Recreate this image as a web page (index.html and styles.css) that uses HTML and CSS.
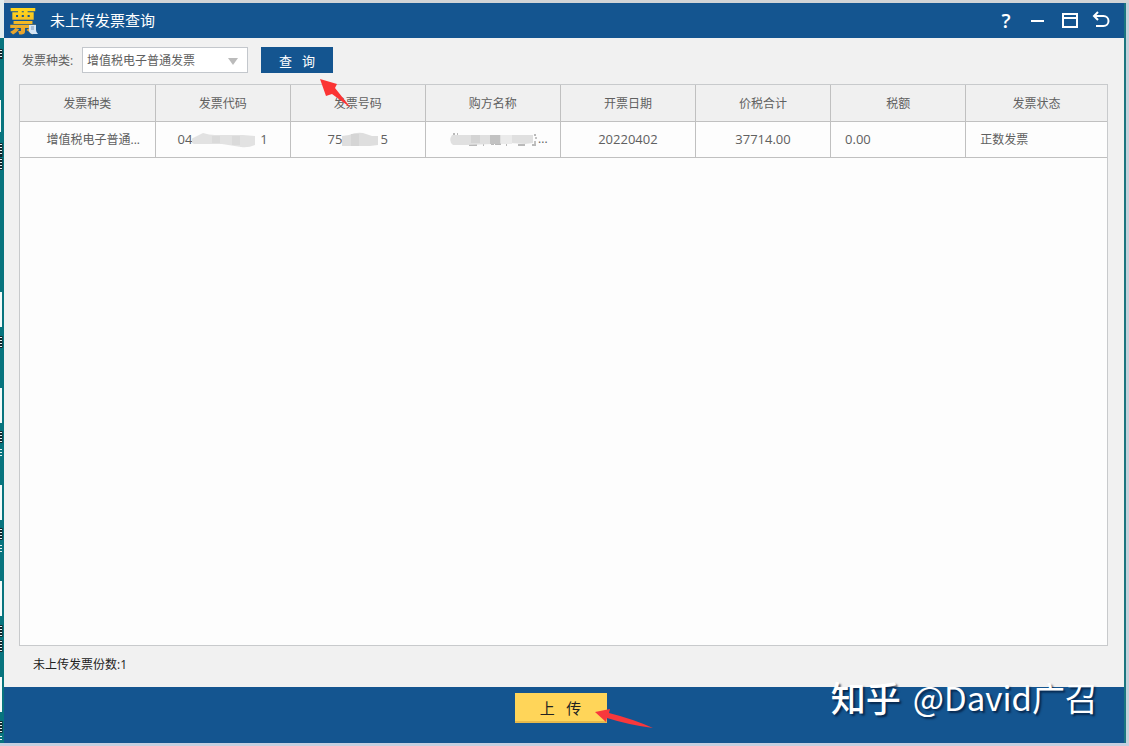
FILE: index.html
```html
<!DOCTYPE html>
<html lang="zh-CN">
<head>
    <meta charset="UTF-8">
    <meta name="viewport" content="width=device-width, initial-scale=1.0">
    <title>未上传发票查询</title>
    <link rel="stylesheet" href="styles.css">
</head>
<body>

    <!-- desktop showing behind the left edge of the window -->
    <svg class="desktop-edge" width="4" height="746" aria-hidden="true">
        <rect width="4" height="38" fill="#e4eeee"/>
        <g fill="#f4fafa">
            <rect y="100" width="1" height="32"/>
            <rect y="292" width="2" height="35"/>
            <rect y="388" width="2" height="35"/>
            <rect y="485" width="2" height="35"/>
            <rect y="581" width="2" height="35"/>
            <rect y="677" width="2" height="35"/>
        </g>
        <path d="M1 49v10M1 143v14M1 158v12M1 336v12M1 431v12M1 528v12M1 625v12M1 640v12M1 721v12" stroke="#12252b" stroke-width="3"/>
        <path d="M1 50v8M1 144v12M1 159v10M1 337v10M1 432v10M1 449v8M1 529v10M1 545v8M1 626v10M1 641v10M1 722v10M1 736v6" stroke="#e8f0f0" stroke-width="2" stroke-dasharray="1 2"/>
    </svg>

    <div class="window">
        <header class="title-bar">
            <div class="logo">
                <span class="logo-text">票</span>
                <svg class="logo-page" width="10" height="9" viewBox="0 0 10 9" aria-hidden="true"><path d="M1 0h7v5q0 2 2 4H4Q1 8 1 5z" fill="#d5e5f5"/><path d="M3 2h3M3 4h3" stroke="#7899bd"/></svg>
            </div>
            <h1>未上传发票查询</h1>
            <div class="window-buttons">
                <button type="button" class="help" aria-label="帮助">?</button>
                <button type="button" aria-label="最小化"><svg width="18" height="18" viewBox="0 0 18 18"><path d="M2 9h13" /></svg></button>
                <button type="button" aria-label="最大化"><svg width="18" height="18" viewBox="0 0 18 18"><path d="M2 2h14v13H2zM2 6h14"/></svg></button>
                <button type="button" aria-label="返回"><svg width="18" height="18" viewBox="0 0 18 18"><path d="M5 0L1 4l4 4M1 4h9.500a5 5 0 0 1 0 10H3"/></svg></button>
            </div>
        </header>

        <main>
            <form class="search">
                <label for="invoice-type">发票种类:</label>
                <div class="select-box">
                    <select id="invoice-type">
                        <option>增值税电子普通发票</option>
                    </select>
                </div>
                <div class="query-box">
                    <button type="button" class="query">查&nbsp;&nbsp; 询</button>
                    <svg class="arrow arrow-query" width="34" height="32" viewBox="0 0 34 32" aria-hidden="true"><path d="M1 1l17 5-2 4 16 20L13 16l-6 2z" fill="#fb3434"/></svg>
                </div>
            </form>

            <div class="grid">
                <table>
                    <thead>
                        <tr>
                            <th>发票种类</th>
                            <th>发票代码</th>
                            <th>发票号码</th>
                            <th>购方名称</th>
                            <th>开票日期</th>
                            <th>价税合计</th>
                            <th>税额</th>
                            <th class="status">发票状态</th>
                        </tr>
                    </thead>
                    <tbody>
                        <tr>
                            <td class="type">增值税电子普通...</td>
                            <td class="number">04<svg class="mask" width="68" height="16" viewBox="0 0 68 16" aria-hidden="true"><path d="M-1 7Q5 4 11 1q6 2 12 2h28l12 1v9q-7 3-14 2l-19-3-28 0Q-3 10-1 7z" fill="#e2e2e2"/><path d="M20 4h8v7h-8zM40 4h8v9h-8z" fill="#dadada"/></svg>1</td>
                            <td class="number">75<svg class="mask" width="38" height="16" viewBox="0 0 38 16" aria-hidden="true"><path d="M0 4l7-1q7-3 14-2l9 3h6v9l-8 1H0z" fill="#dedede"/><path d="M9 2h8v12H9z" fill="#d5d5d5"/></svg>5</td>
                            <td class="buyer"><svg class="mask" width="88" height="16" viewBox="0 0 88 16" aria-hidden="true"><path d="M3 2h2M7 2h1M84 3h2M19 13h8M33 13h1M41 12h3M45 12h6M56 13h1M68 13h7M82 13h4" stroke="#777"/><path d="M86 5v2M85 9v3" stroke="#888"/><path d="M2 3h81v8l-8 1-15-1-17 1-27 1H3q-5-4-1-10z" fill="#e0e0e0"/><path d="M21 3h9v8h-9z" fill="#d4d4d4"/><path d="M40 3h10v9H40z" fill="#c2c2c2"/><path d="M51 3h11v9H51z" fill="#ebebeb"/></svg>...</td>
                            <td class="number">20220402</td>
                            <td class="number">37714.00</td>
                            <td class="number left">0.00</td>
                            <td class="left">正数发票</td>
                        </tr>
                    </tbody>
                </table>
            </div>

            <p class="count">未上传发票份数:1</p>
        </main>

        <footer>
            <div class="upload-box">
                <button type="button" class="upload">上&nbsp;&nbsp; 传</button>
                <svg class="arrow arrow-upload" width="60" height="22" viewBox="0 0 60 22" aria-hidden="true"><path d="M1 4l15-3-1 4q24 6 44 15Q35 17 13 10l-1 4z" fill="#f8383c"/></svg>
            </div>
            <div class="watermark"><b>知乎</b><span>@David广召</span></div>
        </footer>
    </div>

</body>
</html>
```
FILE: styles.css
```css
* { box-sizing: border-box; }
body { margin: 0; padding: 3px 5px 3px 4px; height: 100vh; background: linear-gradient(to left, #c3d2dc 3px, #1b7680 3px, #1b7680 50%, #08747e 50%); font-family: "Open Sans", "Noto Sans CJK SC", sans-serif; font-size: 12px; color: #606060; overflow: hidden; position: relative; }
body::before, body::after { content: ""; position: absolute; left: 0; right: 0; height: 3px; background: #d2d4d6; }
body::before { top: 0; }
body::after { bottom: 0; background: #c5cfe0; }
.desktop-edge { position: absolute; left: 0; top: 0; }
button, select { font-family: inherit; border: none; border-radius: 0; cursor: pointer; }

.window { position: relative; display: flex; flex-direction: column; height: 100%; background: #f1f1f1; }

/* title bar */
.title-bar { display: flex; align-items: center; height: 35px; padding: 0 13px 0 5px; background: #145590; color: #fff; }
.logo { position: relative; width: 30px; height: 35px; }
.logo-text { font-family: "Noto Sans CJK SC", sans-serif; font-size: 28px; line-height: 34px; font-weight: 900; background: linear-gradient(#ffd31c 30%, #e9a52c 75%); -webkit-background-clip: text; background-clip: text; color: transparent; }
.logo-page { position: absolute; right: 1px; bottom: 4px; }
h1 { margin: 0 0 0 11px; padding-bottom: 2px; font-size: 15px; line-height: 20px; font-weight: 400; }
.window-buttons { display: flex; align-items: center; gap: 14px; margin-left: auto; }
.window-buttons button { width: 18px; height: 20px; padding: 0; background: none; color: #fff; }
.window-buttons svg { display: block; overflow: visible; fill: none; stroke: #fff; stroke-width: 2; }
.window-buttons .help { font-size: 20px; line-height: 18px; font-weight: 600; }

/* search row */
main { flex: 1; display: flex; flex-direction: column; padding: 9px 16px 0 15px; min-height: 0; }
.search { display: flex; align-items: center; height: 26px; margin: 0 0 11px; padding-left: 3px; }
.search label { width: 60px; }
.select-box { position: relative; width: 166px; height: 26px; }
.select-box::after { content: ""; position: absolute; right: 10px; top: 11px; border: 5px solid transparent; border-top: 7px solid #bbb; border-bottom: 0; pointer-events: none; }
.select-box select { appearance: none; width: 100%; height: 100%; padding: 0 24px 0 4px; border: 1px solid #c3c7cc; background: #fff; font-size: 12px; color: #606060; }
.query-box { position: relative; margin-left: 13px; }
.query { display: block; width: 72px; height: 26px; padding: 0; background: #145590; color: #fff; font-size: 13px; }
.arrow { position: absolute; z-index: 1; pointer-events: none; }
.arrow-query { left: 58px; top: 31px; }

/* invoice table */
.grid { flex: 1; border: 1px solid #c8cacc; background: #fdfdfd; }
table { width: 100%; border-collapse: collapse; table-layout: fixed; }
th, td { height: 36px; padding: 0; border-right: 1px solid #c0c0c0; border-bottom: 1px solid #c0c0c0; text-align: center; font-weight: 400; white-space: nowrap; }
th { background: #f0f0f0; }
th:last-child, td:last-child { border-right: none; }
.status { width: 13%; }
td.type, td.buyer { padding-left: 12px; }
td.number { font-size: 13px; }
td.left { padding-left: 14px; text-align: left; }
.mask { vertical-align: middle; }

.count { margin: 0; padding-left: 14px; height: 41px; line-height: 38px; color: #222; }

/* bottom bar */
footer { position: relative; display: flex; justify-content: center; height: 56px; padding-top: 6px; background: #145590; }
.upload-box { position: relative; height: 30px; margin-right: 7px; }
.upload { display: block; width: 92px; height: 30px; padding: 0; border-bottom: 2px solid #e6b94c; background: #ffd559; color: #222; font-size: 15px; }
.arrow-upload { left: 79px; top: 15px; }
.watermark { position: absolute; right: 26px; top: -14px; display: flex; gap: 12px; font-family: "Noto Sans CJK SC", sans-serif; font-size: 33px; line-height: 48px; color: #fff; text-shadow: 2px 2px 2px rgba(0, 20, 50, 0.7); white-space: nowrap; }
.watermark b { font-size: 35px; font-weight: 500; }
```
